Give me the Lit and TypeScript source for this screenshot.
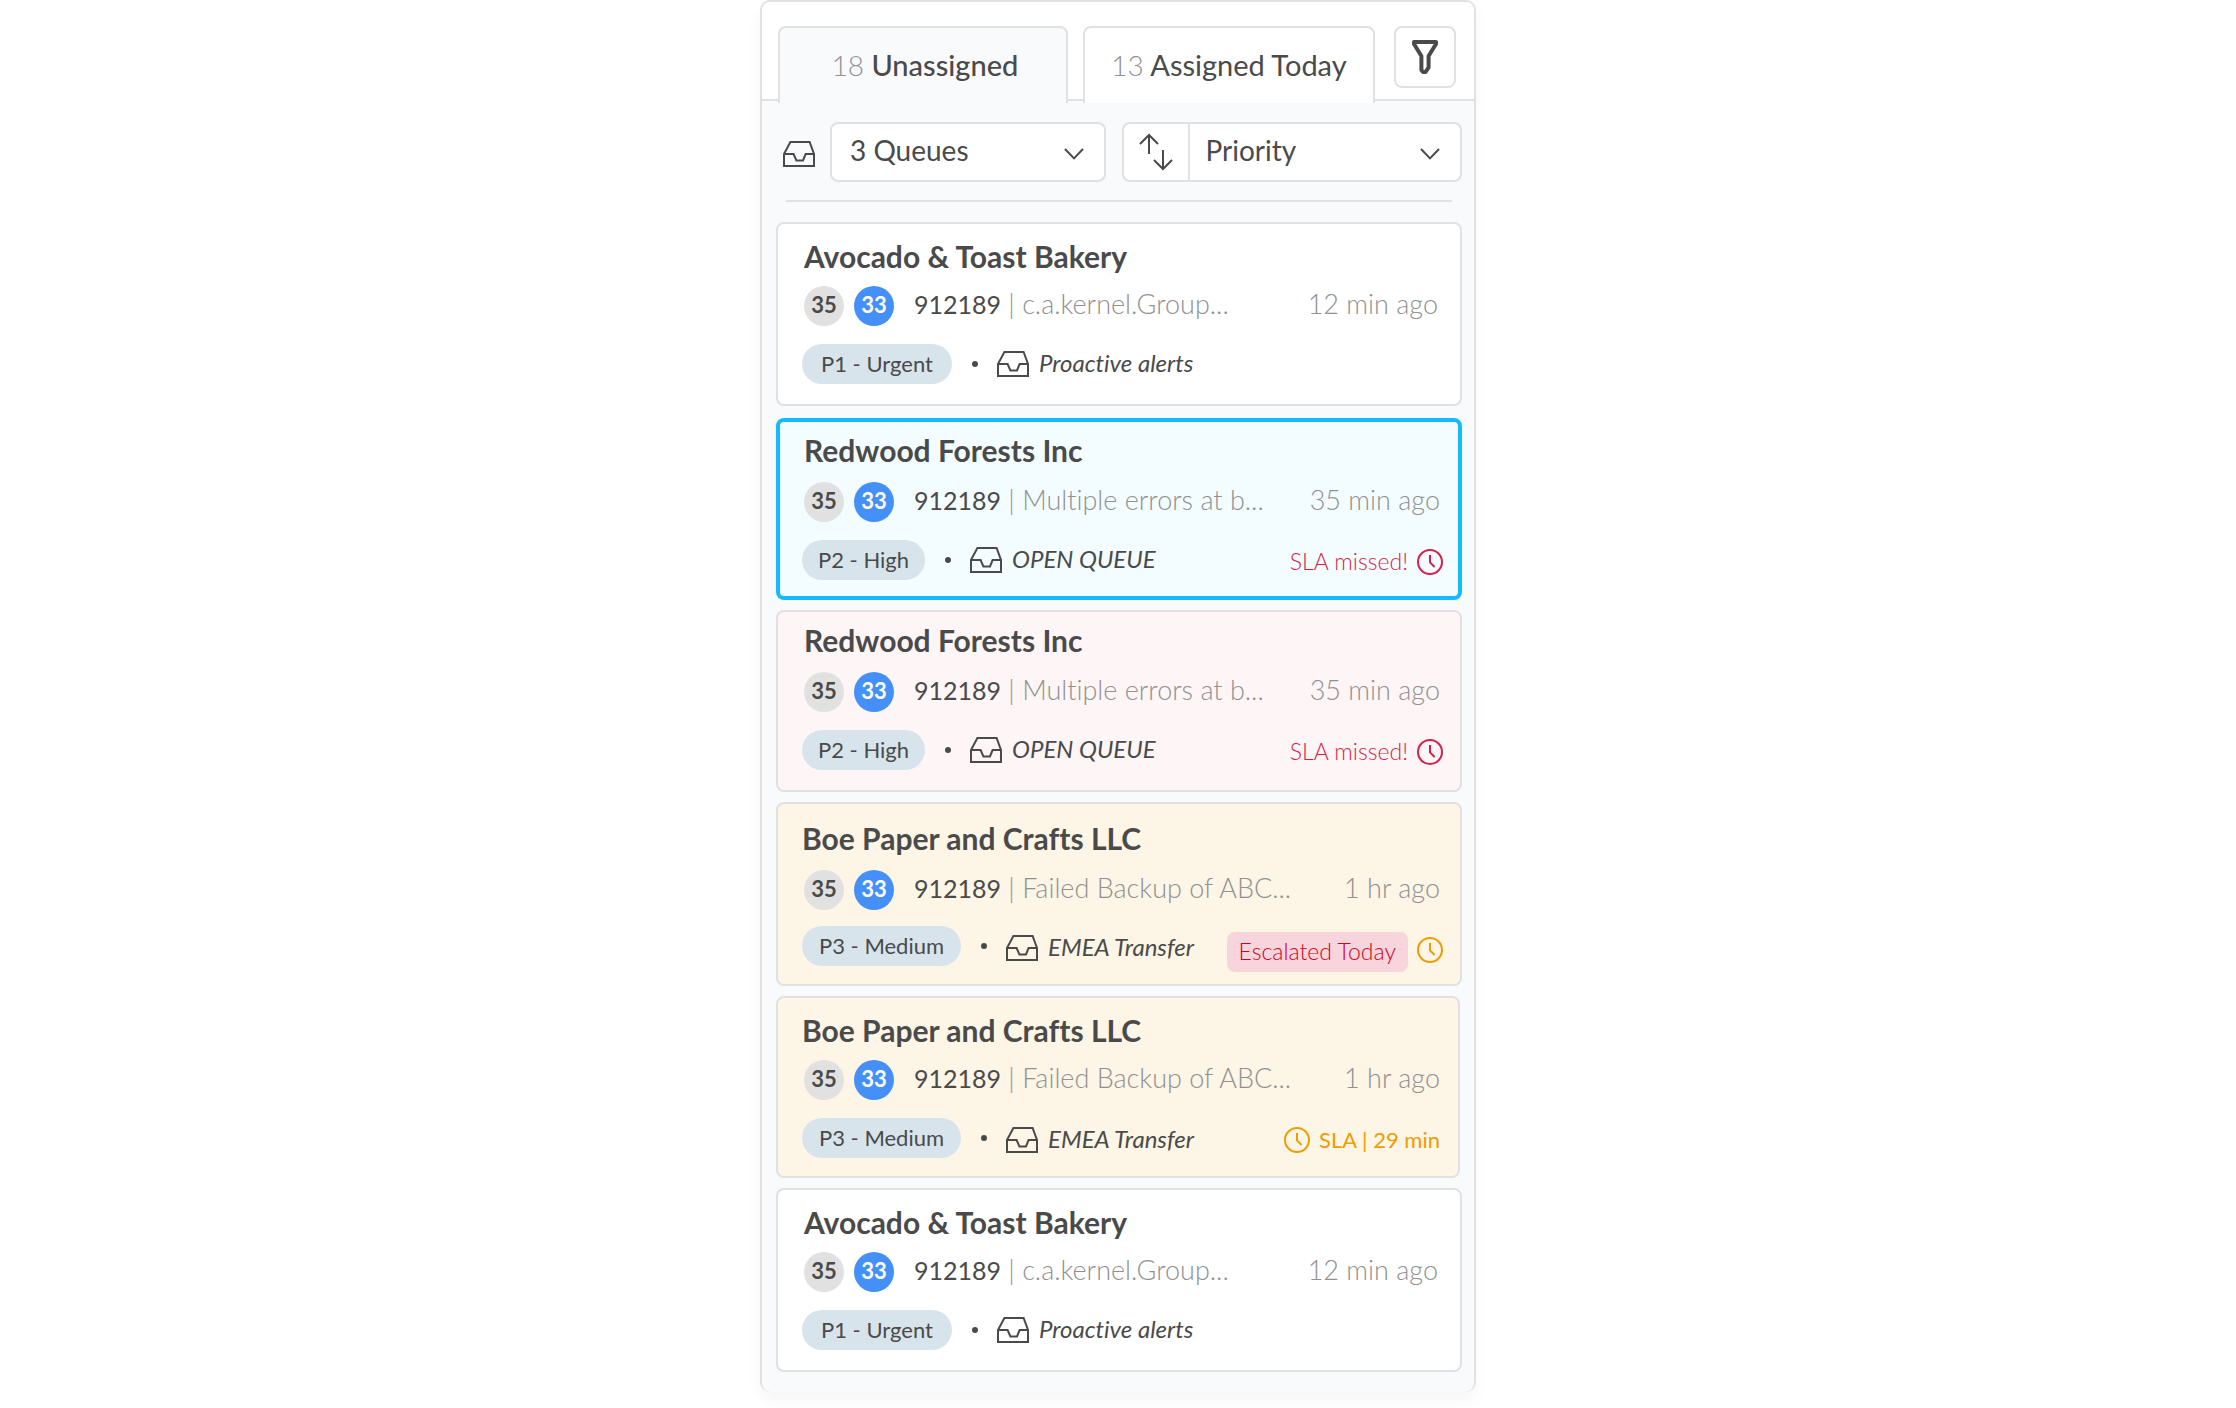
import { LitElement, html, css, svg, nothing } from "lit";
import { customElement, property } from "lit/decorators.js";

type Tone = "plain" | "selected" | "missed" | "warning";
type Status = "missed" | "escalated" | "remaining";

interface Ticket {
  account: string;
  subject: string;
  age: string;
  priority: string;
  queue: string;
  tone: Tone;
  status?: Status;
}

const bakery: Ticket = {
  account: "Avocado & Toast Bakery",
  subject: "c.a.kernel.Group...",
  age: "12 min ago",
  priority: "P1 - Urgent",
  queue: "Proactive alerts",
  tone: "plain",
};

const redwood: Ticket = {
  account: "Redwood Forests Inc",
  subject: "Multiple errors at b...",
  age: "35 min ago",
  priority: "P2 - High",
  queue: "OPEN QUEUE",
  tone: "selected",
  status: "missed",
};

const paper: Ticket = {
  account: "Boe Paper and Crafts LLC",
  subject: "Failed Backup of ABC...",
  age: "1 hr ago",
  priority: "P3 - Medium",
  queue: "EMEA Transfer",
  tone: "warning",
  status: "escalated",
};

const tickets: Ticket[] = [
  bakery,
  redwood,
  { ...redwood, tone: "missed" },
  paper,
  { ...paper, status: "remaining" },
  bakery,
];

const inboxIcon = html`<svg class="inbox" viewBox="0 0 32 26" width="32" height="26" aria-hidden="true">
  ${svg`<path d="M1 25V13L7.4 1H26.6L31 13V25ZM1 13H10.6L13.4 19.4H20L22.6 13H31" fill="none" stroke="currentColor" stroke-width="2"/>`}
</svg>`;

const clockIcon = html`<svg class="clock" viewBox="0 0 26 26" width="26" height="26" aria-hidden="true">
  ${svg`<circle cx="13" cy="13" r="12" fill="none" stroke="currentColor" stroke-width="2"/>
  <path d="M13 6V13.4L17.6 18" fill="none" stroke="currentColor" stroke-width="2"/>`}
</svg>`;

const chevronIcon = html`<svg class="chevron" viewBox="0 0 20 12" width="20" height="12" aria-hidden="true">
  ${svg`<path d="M1 1L10 10.4L19 1" fill="none" stroke="currentColor" stroke-width="2"/>`}
</svg>`;

@customElement("ticket-card")
export class TicketCard extends LitElement {
  @property({ attribute: false }) ticket!: Ticket;

  static styles = css`
    :host { display: block; font-variant-ligatures: none; }
    .card {
      box-sizing: border-box;
      height: 184px;
      padding: 14px 22px 0 24px;
      border: 2px solid #e1e1e1;
      border-radius: 8px;
      background: #fff;
      color: #4a4a4a;
    }
    .selected {
      height: 182px;
      padding: 10px 18px 0 22px;
      border: 4px solid #12bbfd;
      background: #f3fdff;
    }
    .missed { height: 182px; padding: 10px 20px 0 24px; background: #fef5f6; }
    .warning { padding: 16px 20px 0 24px; background: #fdf5e6; }
    .remaining { height: 182px; margin-right: 2px; padding: 14px 18px 0 24px; }
    .title {
      margin: 0 0 14px 2px;
      font-size: 30px;
      line-height: 36px;
      font-weight: 700;
      white-space: nowrap;
    }
    .plain .title { margin-bottom: 12px; }
    .warning .title { margin-left: 0; }
    .remaining .title { margin-bottom: 12px; }
    .row { display: flex; align-items: center; height: 40px; white-space: nowrap; }
    .summary { padding-left: 2px; }
    .meta { margin-top: 18px; }
    .warning .meta { margin-top: 16px; }
    .remaining .meta { margin-top: 18px; }
    .count {
      width: 40px;
      height: 40px;
      margin-right: 10px;
      border-radius: 50%;
      background: #e1e1e1;
      font-size: 22px;
      line-height: 38px;
      font-weight: 700;
      text-align: center;
    }
    .count.open { margin-right: 20px; background: #458ff9; color: #fff; }
    .case { padding-bottom: 4px; font-size: 25px; line-height: 36px; }
    .subject, .age { color: #919191; font-size: 27px; font-weight: 300; }
    .subject { white-space: pre; }
    .age { margin-left: auto; padding-bottom: 4px; line-height: 36px; }
    .pill {
      height: 40px;
      padding: 0 17px;
      border-radius: 20px;
      background: #d8e4ec;
      font-size: 22px;
      line-height: 40px;
    }
    .plain .pill { padding: 0 19px; }
    .selected .pill, .missed .pill { padding: 0 16px; }
    .dot { width: 6px; height: 6px; margin: 0 19px 0 20px; border-radius: 50%; background: #4a4a4a; }
    .inbox, .clock { display: block; flex: none; }
    .origin { display: flex; align-items: center; gap: 10px; }
    .warning .origin { padding-top: 4px; }
    .queue { padding-bottom: 2px; font-size: 24px; line-height: 36px; font-style: italic; }
    .status {
      display: flex;
      align-items: center;
      gap: 9px;
      margin-left: auto;
      margin-right: -3px;
      padding-top: 4px;
      font-size: 23px;
      line-height: 40px;
      font-weight: 300;
    }
    .late { color: #d71f48; }
    .late span { padding-bottom: 2px; }
    .soon { margin-right: 0; color: #f09c00; font-size: 22px; font-weight: 400; }
    .escalated { padding-top: 8px; color: #f09c00; }
    .flag {
      margin-top: 4px;
      padding: 0 12px 2px;
      border-radius: 8px;
      background: #f8d5dd;
      color: #d0021b;
      line-height: 38px;
    }
  `;

  private renderStatus(status: Status) {
    if (status === "missed") {
      return html`<span class="status late"><span>SLA missed!</span>${clockIcon}</span>`;
    }
    if (status === "escalated") {
      return html`<span class="status escalated"><span class="flag">Escalated Today</span>${clockIcon}</span>`;
    }
    return html`<span class="status soon">${clockIcon}<span>SLA | 29 min</span></span>`;
  }

  render() {
    const t = this.ticket;
    return html`<article class="card ${t.tone} ${t.status === "remaining" ? "remaining" : ""}">
      <h2 class="title">${t.account}</h2>
      <div class="row summary">
        <span class="count">35</span><span class="count open">33</span>
        <span class="case">912189<span class="subject"> | ${t.subject}</span></span>
        <span class="age">${t.age}</span>
      </div>
      <div class="row meta">
        <span class="pill">${t.priority}</span><span class="dot"></span>
        <span class="origin">${inboxIcon}<span class="queue">${t.queue}</span></span>
        ${t.status ? this.renderStatus(t.status) : nothing}
      </div>
    </article>`;
  }
}

@customElement("app-root")
export class AppRoot extends LitElement {
  static styles = css`
    :host {
      display: flex;
      justify-content: center;
      min-height: 100vh;
      background: #fff;
      color: #4a4a4a;
      font-family: Lato, "Liberation Sans", sans-serif;
    }
    .panel {
      box-sizing: border-box;
      width: 100%;
      max-width: 716px;
      align-self: flex-start;
      padding-bottom: 20px;
      border: 2px solid #e1e1e1;
      border-bottom: 0;
      border-radius: 10px;
      background: #f8fafc;
      box-shadow: 0 8px 16px rgba(0, 0, 0, 0.04);
    }
    .header {
      display: flex;
      align-items: flex-start;
      height: 97px;
      padding: 0 18px 0 16px;
      border-bottom: 2px solid #e1e1e1;
      border-radius: 8px 8px 0 0;
      background: #fff;
    }
    .tabs {
      display: grid;
      grid-template-columns: 290fr 292fr;
      flex: 1;
      gap: 15px;
      height: 75px;
      margin-top: 24px;
    }
    .tab {
      box-sizing: border-box;
      padding: 0 0 2px;
      border: 2px solid #e1e1e1;
      border-bottom: 0;
      border-radius: 8px 8px 0 0;
      background: #fff;
      color: inherit;
      font: 400 29px/36px Lato, "Liberation Sans", sans-serif;
      white-space: nowrap;
    }
    .tab.active { height: 77px; padding-left: 4px; background: #f8fafc; font-weight: 500; }
    .total { color: #919191; font-size: 28px; font-weight: 300; }
    .filter {
      display: grid;
      place-items: center;
      width: 62px;
      height: 62px;
      margin: 24px 0 0 19px;
      padding: 0;
      border: 2px solid #e1e1e1;
      border-radius: 8px;
      background: #fff;
      color: #4a4a4a;
    }
    .controls { display: flex; align-items: center; margin: 21px 12px 18px 21px; }
    .box {
      box-sizing: border-box;
      display: flex;
      align-items: center;
      height: 60px;
      border: 2px solid #e1e1e1;
      border-radius: 8px;
      background: #fff;
    }
    .queues { flex: 276; margin-left: 15px; }
    .sorting { flex: 340; margin-left: 16px; }
    .field { display: grid; flex: 1; align-items: center; height: 100%; }
    .field > * { grid-area: 1 / 1; }
    .field select {
      width: 100%;
      height: 100%;
      padding: 0 48px 4px 18px;
      border: 0;
      background: none;
      color: inherit;
      font: 400 28px/36px Lato, "Liberation Sans", sans-serif;
      appearance: none;
    }
    .sorting select { padding-left: 15px; }
    .chevron { justify-self: end; margin: 4px 20px 0 0; pointer-events: none; }
    .order {
      display: grid;
      place-items: center;
      width: 66px;
      height: 100%;
      padding: 0;
      border: 0;
      border-right: 2px solid #e1e1e1;
      background: none;
      color: inherit;
    }
    .inbox { display: block; margin-top: 4px; }
    .rule { height: 2px; margin: 0 22px 20px 24px; border: 0; background: #e1e1e1; }
    .list {
      display: flex;
      flex-direction: column;
      gap: 10px;
      margin: 0 12px 0 14px;
      padding: 0;
      list-style: none;
    }
    .lead { margin-bottom: 2px; }
  `;

  render() {
    return html`<main class="panel">
      <header class="header">
        <div class="tabs" role="tablist">
          <button class="tab active" role="tab" aria-selected="true"><span class="total">18</span> Unassigned</button>
          <button class="tab" role="tab" aria-selected="false"><span class="total">13</span> Assigned Today</button>
        </div>
        <button class="filter" aria-label="Filter">
          <svg viewBox="0 0 28 36" width="28" height="36" aria-hidden="true">
            <path d="M3 3H25V5L17.6 17V28.4L14.6 33H12L10.4 31V17L3 5Z" fill="none" stroke="currentColor" stroke-width="4" stroke-linejoin="round"/>
          </svg>
        </button>
      </header>
      <div class="controls">
        ${inboxIcon}
        <div class="box queues">
          <label class="field">
            <select aria-label="Queues"><option>3 Queues</option></select>
            ${chevronIcon}
          </label>
        </div>
        <div class="box sorting">
          <button class="order" aria-label="Reverse order">
            <svg viewBox="0 0 34 38" width="34" height="38" aria-hidden="true">
              <path d="M10 21V2M1 11L10 2L19 11M24 17V36M15 27L24 36L33 27" fill="none" stroke="currentColor" stroke-width="2"/>
            </svg>
          </button>
          <label class="field">
            <select aria-label="Sort by"><option>Priority</option></select>
            ${chevronIcon}
          </label>
        </div>
      </div>
      <hr class="rule" />
      <ul class="list">
        ${tickets.map((t, i) => html`<li class=${i === 0 ? "lead" : ""}><ticket-card .ticket=${t}></ticket-card></li>`)}
      </ul>
    </main>`;
  }
}
